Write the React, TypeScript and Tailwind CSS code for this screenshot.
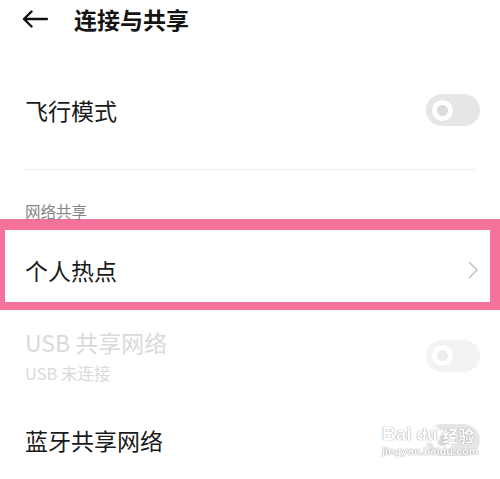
// App.tsx
const font = "font-['Noto_Sans_CJK_SC','Noto_Sans',sans-serif]";

const Toggle = ({ disabled = false }: { disabled?: boolean }) => (
  <div
    className={`w-[54px] h-[32px] rounded-full flex items-center pl-[6px] ${
      disabled ? "bg-[#f3f3f3]" : "bg-[#e6e6e6]"
    }`}
  >
    <div
      className={`w-[21px] h-[21px] rounded-full border-[5px] border-white ${
        disabled ? "bg-[#ededed]" : "bg-[#dcdcdc]"
      }`}
    />
  </div>
);

const App = () => {
  return (
    <div className={`relative w-[500px] h-[479px] bg-white overflow-hidden ${font}`}>
      {/* header */}
      <div className="h-[38px] flex items-center pl-[22px]">
        <svg width="26" height="18" viewBox="0 0 26 18" fill="none">
          <path
            d="M25 9H2M9.5 1.5L2 9l7.5 7.5"
            stroke="#111"
            strokeWidth="2.4"
            strokeLinecap="round"
            strokeLinejoin="round"
          />
        </svg>
        <span className="ml-[26px] text-[23px] leading-[28px] font-semibold text-[#141414]">
          连接与共享
        </span>
      </div>

      {/* airplane mode */}
      <div className="mt-[40px] h-[64px] flex items-center justify-between pl-[25px] pr-[20px]">
        <span className="text-[23px] text-[#1a1a1a]">飞行模式</span>
        <Toggle />
      </div>

      <div className="mt-[27px] mx-[24px] h-px bg-[#eeeeee]" />

      <div className="mt-[34px] pl-[25px] h-[15px] text-[15.5px] leading-[15px] text-[#858585]">
        网络共享
      </div>

      {/* hotspot, highlighted */}
      <div className="border-[#f5739b] border-t-[11px] border-b-[8px] border-l-[5px] border-r-[10px]">
        <div className="h-[72px] pt-[8px] flex items-center justify-between pl-[20px] pr-[11px]">
          <span className="text-[23px] text-[#1a1a1a]">个人热点</span>
          <svg width="12" height="20" viewBox="0 0 12 20" fill="none">
            <path d="M2 2l8 8-8 8" stroke="#c4c4c4" strokeWidth="1.6" />
          </svg>
        </div>
      </div>

      {/* usb tethering */}
      <div className="mt-[18px] flex items-center justify-between pl-[25px] pr-[20px]">
        <div className="flex flex-col gap-[7px]">
          <span className="text-[23px] leading-[28px] text-[#dadada]">USB 共享网络</span>
          <span className="text-[16.5px] leading-[20px] text-[#dadada]">USB 未连接</span>
        </div>
        <Toggle disabled />
      </div>

      {/* bluetooth tethering */}
      <div className="mt-[41px] h-[32px] flex items-center justify-between pl-[25px] pr-[20px]">
        <span className="text-[23px] text-[#1a1a1a]">蓝牙共享网络</span>
        <Toggle />
      </div>

      {/* watermark */}
      <div className="absolute left-[382px] top-[424px] flex flex-col items-start text-white font-['Liberation_Sans',sans-serif] [text-shadow:0_0_1px_#9a9a9a,0_0_1px_#9a9a9a]">
        <div className="flex items-end leading-none">
          <span className="text-[19px] font-bold">Bai</span>
          <span className="ml-[2px] px-[3px] rounded-[6px] bg-white/70 text-[17px] font-bold">du</span>
          <span className={`ml-[2px] text-[16px] font-bold ${font}`}>经验</span>
        </div>
        <span className="mt-[3px] text-[11px] leading-none font-bold">jingyan.baidu.com</span>
      </div>
    </div>
  );
};

export default App;
